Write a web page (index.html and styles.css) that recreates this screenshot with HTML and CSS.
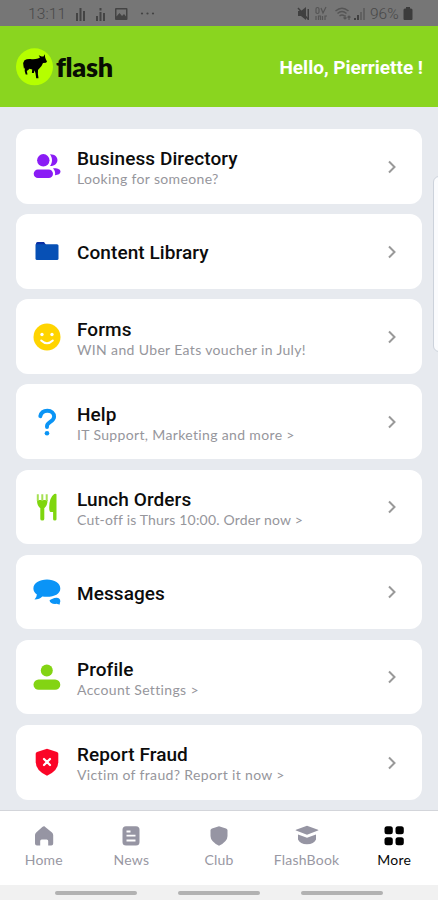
FILE: index.html
```html
<!DOCTYPE html>
<html lang="en">
<head>
    <title>Flash - More</title>
    <meta charset="UTF-8">
    <meta name="viewport" content="width=device-width, initial-scale=1">
    <link rel="stylesheet" href="styles.css">
</head>
<body>
    <div class="phone">
        <div class="status-bar">
            <span class="status-time">13:11</span>
            <svg class="status-left" width="84" height="16" viewBox="0 0 84 16" fill="#444">
                <path d="M0 7h2v8H0zM3.500 2h2v13h-2zM7 5h2v10H7zM20 10h2v5h-2zM23.500 6h2v9h-2zM27 7h2v8h-2zM23.500 2h2v2.500h-2z"/>
                <path fill-rule="evenodd" d="M40 2h10.500q1 0 1 1v10q0 1-1 1H40q-1 0-1-1V3q0-1 1-1zM40.500 3.500v7l3-3.500 2.500 3 2-2 2 2.500v-7z"/>
                <circle cx="66" cy="7.500" r="1.100"/><circle cx="71.500" cy="7.500" r="1.100"/><circle cx="77" cy="7.500" r="1.100"/>
            </svg>
            <svg class="status-right" width="70" height="16" viewBox="0 0 70 16" fill="#404040">
                <path d="M1 5h3l5-4v13l-5-4H1zM10.500 3H12v11h-1.500z"/>
                <path d="M1 2l10 11" stroke="#404040" stroke-width="1.500"/>
                <g fill="none" stroke="#555" stroke-width="1.200">
                    <path d="M19 7V3q0-1.500 1.500-1.500T22 3v3q0 1.500-1.500 1.500T19 6M24 2l2 5 3-6M19 10v4M21.500 14v-4h2v4M25.500 10v4M28 14v-4h2"/>
                    <path d="M38.500 5q6.500-5.500 13 0M40.500 7.500q4.500-4 9 0M42.500 10q2.500-2 5 0" stroke-width="1.500"/>
                    <path d="M48 9v4m-1.500-1.500L48 13l1.500-1.500M52 14v-4m-1.500 1.500L52 10l1.500 1.500"/>
                </g>
                <path d="M57 12h2v2h-2zM60 9h2v5h-2z"/>
                <path d="M63 6h2v8h-2zM66 2h2v12h-2z" fill="#606060"/>
            </svg>
            <span class="status-battery">96%</span>
            <svg width="10" height="14" viewBox="0 0 10 14"><path d="M3 0h4v1.500h1q1.500 0 1.500 1.500v9q0 1-1 1h-7q-1 0-1-1V3q0-1.500 1.500-1.500h1z" fill="#3c3c3c"/></svg>
        </div>

        <header class="header">
            <svg class="logo-mark" width="38" height="38" viewBox="0 0 38 38">
                <circle cx="18.500" cy="18.800" r="18.500" fill="#b5ff00"/>
                <path d="M8.500 12.200q2.500-1.500 6-1.200 4 .6 7.500-.6l2-1-1.300-2.200 2.800 1.200 2 .1 1.300-2.300.3 3 .7 2 1.200 2.300-1 1.300-3 .2-1.500 3-2.200 2.500-1.300 1.500-.1 4 .6 4.200h-2.300l-.7-5-.9-3-.8 2.800h-1.900l.3-3.500-2.700-.8-1 1-1.700 1.300.7 3.500H9.700l-1-3.500.2-3.500-.9 1.500-.5-3q-.8-4 1-5.800z"/>
            </svg>
            <span class="logo-text">flash</span>
            <span class="greeting">Hello, Pierriette !</span>
        </header>

        <main class="menu">
            <a class="card">
                <svg class="icon" viewBox="0 0 28 28" fill="#8a1cf5">
                    <circle cx="10.300" cy="8.300" r="6.200"/>
                    <rect x=".7" y="17.500" width="19.300" height="8.500" rx="4.250"/>
                    <path d="M17 2.300c10-.2 10 12 0 11.800 2.700-3.500 2.700-8 0-11.800zM20 16.500c3.500-.7 7.500.7 7.500 3s-2.200 3.500-5.500 3.700c.6-2.800-.3-5-2-6.700z"/>
                </svg>
                <div class="card-text">
                    <div class="title">Business Directory</div>
                    <div class="subtitle">Looking for someone?</div>
                </div>
                <svg class="chevron" viewBox="0 0 10 14"><path d="M2 1.500L7.500 7 2 12.500"/></svg>
            </a>
            <a class="card">
                <svg class="icon" viewBox="0 0 28 28">
                    <path d="M3 7V6.500q0-1.500 1.500-1.500H11L13.500 8.500H3z" fill="#0a2fa5"/>
                    <path d="M3 7.200h21q1.500 0 1.500 1.500V21.500q0 1.500-1.500 1.500H4Q2.500 23 2.500 21.500V7.200z" fill="#0750b5"/>
                </svg>
                <div class="card-text single">
                    <div class="title">Content Library</div>
                </div>
                <svg class="chevron" viewBox="0 0 10 14"><path d="M2 1.500L7.500 7 2 12.500"/></svg>
            </a>
            <a class="card">
                <svg class="icon" viewBox="0 0 28 28">
                    <circle cx="14" cy="14" r="13.500" fill="#ffd400"/>
                    <circle cx="9" cy="11.500" r="1.700" fill="#fff"/>
                    <circle cx="19" cy="11.500" r="1.700" fill="#fff"/>
                    <path d="M8.200 17.500q5.800 5.500 11.600 0" fill="none" stroke="#fff" stroke-width="2" stroke-linecap="round"/>
                </svg>
                <div class="card-text">
                    <div class="title">Forms</div>
                    <div class="subtitle">WIN and Uber Eats voucher in July!</div>
                </div>
                <svg class="chevron" viewBox="0 0 10 14"><path d="M2 1.500L7.500 7 2 12.500"/></svg>
            </a>
            <a class="card">
                <svg class="icon" viewBox="0 0 28 28">
                    <path d="M7.300 8.200C8.200 4.300 11 2.700 14.300 2.700c4.200 0 6.800 2.500 6.800 6 0 5-7.100 5.300-7.100 9.300v1" fill="none" stroke="#0a94f5" stroke-width="3.900" stroke-linecap="round"/>
                    <circle cx="14" cy="25.200" r="2.300" fill="#0a94f5"/>
                </svg>
                <div class="card-text">
                    <div class="title">Help</div>
                    <div class="subtitle">IT Support, Marketing and more &gt;</div>
                </div>
                <svg class="chevron" viewBox="0 0 10 14"><path d="M2 1.500L7.500 7 2 12.500"/></svg>
            </a>
            <a class="card">
                <svg class="icon" viewBox="0 0 28 28" fill="#7fd60e">
                    <path d="M7.300 14h4v12q0 1.500-2 1.500t-2-1.500zM4 7h10.500q0 5.500-3 8H7q-3-2.500-3-8z"/>
                    <path d="M4.800 1.200V8M9.300 1.200V8M13.700 1.200V8" stroke="#a5e052" stroke-width="2"/>
                    <path d="M23.500 1.500v24.700q0 1.300-1.700 1.300t-1.700-1.300V19h-2.400q-1.500 0-1.500-4.500 0-10 5-13.500 2.300-.7 2.300.5z"/>
                </svg>
                <div class="card-text">
                    <div class="title">Lunch Orders</div>
                    <div class="subtitle tight">Cut-off is Thurs 10:00. Order now &gt;</div>
                </div>
                <svg class="chevron" viewBox="0 0 10 14"><path d="M2 1.500L7.500 7 2 12.500"/></svg>
            </a>
            <a class="card">
                <svg class="icon" viewBox="0 0 28 28" fill="#0a94f7">
                    <path d="M14 1.500c7.500 0 13.300 3.700 13.300 9s-5.800 8.300-13.300 8.300q-2.500 0-4.700-.4-2.500 3-7.800 3 2.300-2.200 2.400-4.800Q.4 14 .4 10.500c0-5.300 6-9 13.600-9z"/>
                    <path d="M16.500 22.500q.5-1 2.500-1.500 2.500-1.300 4.500-1.300 3.800.3 3.800 3.500 0 .9-.5 1.700v1.600q-2 0-3-.7-6.300.7-7.300-3.300z"/>
                </svg>
                <div class="card-text single">
                    <div class="title">Messages</div>
                </div>
                <svg class="chevron" viewBox="0 0 10 14"><path d="M2 1.500L7.500 7 2 12.500"/></svg>
            </a>
            <a class="card">
                <svg class="icon" viewBox="0 0 28 28" fill="#83d413">
                    <circle cx="13.800" cy="7.500" r="6"/>
                    <rect x=".5" y="16.500" width="26.800" height="10.300" rx="5.150"/>
                </svg>
                <div class="card-text">
                    <div class="title">Profile</div>
                    <div class="subtitle">Account Settings &gt;</div>
                </div>
                <svg class="chevron" viewBox="0 0 10 14"><path d="M2 1.500L7.500 7 2 12.500"/></svg>
            </a>
            <a class="card">
                <svg class="icon" viewBox="0 0 28 28">
                    <path d="M14 .8L24 4q1.300.5 1.300 1.800V14q0 8.500-11.300 13.700Q2.700 22.500 2.700 14V5.800Q2.700 4.500 4 4z" fill="#fb0527"/>
                    <path d="M11 11l6 6M17 11l-6 6" stroke="#fff" stroke-width="2.200" stroke-linecap="round"/>
                </svg>
                <div class="card-text">
                    <div class="title">Report Fraud</div>
                    <div class="subtitle">Victim of fraud? Report it now &gt;</div>
                </div>
                <svg class="chevron" viewBox="0 0 10 14"><path d="M2 1.500L7.500 7 2 12.500"/></svg>
            </a>
        </main>
        <div class="edge-handle"></div>

        <nav class="tabs">
            <a class="tab">
                <svg width="24" height="22" viewBox="0 0 24 22"><path d="M12 1L20 7.500q1.200 1 1.200 2.500v8.500q0 2-2 2h-3V16q0-1.500-1.500-1.500h-5Q8.200 14.500 8.200 16v4.500H5q-2 0-2-2V10q0-1.500 1.200-2.500L10.300 2Q12 .5 13.700 2z"/></svg>
                <span>Home</span>
            </a>
            <a class="tab">
                <svg width="24" height="22" viewBox="0 0 24 22"><rect x="3.500" y="1.200" width="17" height="19.300" rx="3.500"/><path d="M7.500 6.500h4M7.500 10.700h9M7.500 15.500h9" stroke="#fff" stroke-width="1.800"/></svg>
                <span>News</span>
            </a>
            <a class="tab">
                <svg width="24" height="22" viewBox="0 0 24 22"><path d="M12 1.200l7 2.300q1.500.6 1.500 2V11q0 5.500-8.500 9.800Q3.500 16.500 3.500 11V5.500q0-1.400 1.500-2z"/></svg>
                <span>Club</span>
            </a>
            <a class="tab">
                <svg width="24" height="22" viewBox="0 0 24 22"><path d="M12 .8L23 4.700q1 .4 0 .9L12 9.800 1 5.600q-1-.5 0-.9zM3 9.500l9 3.300 9-3.300v5Q19 19 12 19.300 5 19 3 14.500z"/></svg>
                <span>FlashBook</span>
            </a>
            <a class="tab active">
                <svg width="24" height="22" viewBox="0 0 24 22"><rect x="2.500" y="1.200" width="8.300" height="8" rx="2.500"/><rect x="13.500" y="1.200" width="8.300" height="8" rx="2.500"/><rect x="2.500" y="12.200" width="8.300" height="8" rx="2.500"/><rect x="13.500" y="12.200" width="8.300" height="8" rx="2.500"/></svg>
                <span>More</span>
            </a>
        </nav>

        <div class="gesture-bar">
            <i></i><i></i><i></i>
        </div>
    </div>
</body>
</html>
```

FILE: styles.css
```css
* {
    box-sizing: border-box;
}
body {
    margin: 0;
    font-family: Roboto, sans-serif;
    font-variant-ligatures: none;
    background-color: #e7eaef;
}
.phone {
    position: relative;
    display: flex;
    flex-direction: column;
    width: 438px;
    height: 900px;
    overflow: hidden;
}
.status-bar {
    display: flex;
    align-items: center;
    height: 26px;
    padding: 1px 25px 0 28px;
    background-color: #767676;
    color: #484848;
    font-size: 15.5px;
}
.status-time {
    width: 48px;
    font-weight: 300;
    letter-spacing: 0.1px;
}
.status-right {
    margin-left: auto;
    margin-right: 3px;
}
.status-battery {
    width: 33px;
    font-weight: 300;
    font-size: 15.5px;
}
.header {
    display: flex;
    align-items: center;
    height: 81px;
    padding: 0 15px 0 16px;
    background-color: #8ad51f;
}
.logo-text {
    margin: -1px 0 0 2px;
    font-family: Lato, sans-serif;
    font-size: 27px;
    font-weight: 800;
    letter-spacing: -0.3px;
    color: #080d02;
}
.greeting {
    margin: 1px 0 0 auto;
    color: #fff;
    font-size: 19px;
    font-weight: 700;
}
.menu {
    display: flex;
    flex-direction: column;
    gap: 10.5px;
    flex: 1;
    padding: 22px 16px 0;
}
.card {
    display: flex;
    align-items: center;
    flex-shrink: 0;
    height: 74.650px;
    padding: 0 25px 0 17px;
    border-radius: 12px;
    background-color: #fff;
}
.icon {
    width: 28px;
    height: 28px;
    margin-right: 16px;
}
.card-text {
    flex: 1;
    padding-top: 3px;
    white-space: nowrap;
}
.card-text.single {
    padding-top: 2px;
}
.title {
    color: #0c0c0c;
    font-size: 19px;
    font-weight: 500;
    line-height: 23px;
    letter-spacing: 0.08px;
}
.subtitle {
    color: #96969c;
    font-family: Lato, sans-serif;
    font-size: 14px;
    line-height: 18px;
    letter-spacing: 0.35px;
}
.subtitle.tight {
    letter-spacing: 0.18px;
}
.chevron {
    width: 10px;
    height: 14px;
    margin-top: 0.6px;
    fill: none;
    stroke: #999;
    stroke-width: 2;
}
.edge-handle {
    position: absolute;
    top: 176px;
    right: -8px;
    width: 13px;
    height: 176px;
    border: 1px solid #ccd2db;
    border-radius: 6px;
    background-color: #fafbfd;
}
.tabs {
    display: flex;
    height: 75px;
    border-top: 1px solid #d3d5da;
    background-color: #fff;
}
.tab {
    display: flex;
    flex-direction: column;
    align-items: center;
    flex: 1;
    padding-top: 14px;
    color: #9998a3;
    fill: #9695a3;
    font-family: Lato, sans-serif;
    font-size: 14px;
    letter-spacing: 0.2px;
}
.tab span {
    margin-top: 4px;
    line-height: 18px;
}
.tab.active {
    color: #080808;
    fill: #000;
}
.gesture-bar {
    display: flex;
    justify-content: center;
    align-items: center;
    gap: 41px;
    height: 15px;
    background-color: #f1f1f1;
}
.gesture-bar i {
    width: 82px;
    height: 4px;
    border-radius: 2px;
    background-color: #b2b2b2;
}
```
